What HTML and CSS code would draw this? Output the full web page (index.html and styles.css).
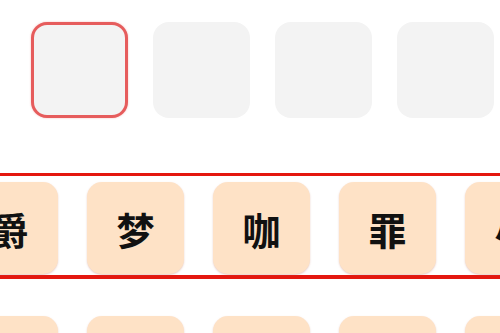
FILE: index.html
```html
<!DOCTYPE html>
<html lang="zh-CN">
<head>
    <meta charset="UTF-8">
    <meta name="viewport" content="width=device-width, initial-scale=1.0">
    <title>猜词</title>
    <link rel="stylesheet" href="styles.css">
</head>
<body>
    <div class="answer-row">
        <div class="slot active"></div>
        <div class="slot"></div>
        <div class="slot"></div>
        <div class="slot"></div>
    </div>

    <div class="pick-frame">
        <div class="tile-row">
            <div class="tile">爵</div>
            <div class="tile">梦</div>
            <div class="tile">咖</div>
            <div class="tile">罪</div>
            <div class="tile">小</div>
        </div>
    </div>

    <div class="tile-row next-row">
        <div class="tile">王</div>
        <div class="tile">想</div>
        <div class="tile">人</div>
        <div class="tile">恶</div>
        <div class="tile">士</div>
    </div>
</body>
</html>
```

FILE: styles.css
```css
body {
    margin: 0;
    padding: 0;
    background: #fff;
    font-family: "Noto Sans CJK SC", "Noto Sans", sans-serif;
    overflow: hidden;
    width: 500px;
    height: 333px;
}
.answer-row {
    display: flex;
    gap: 25px;
    padding: 22px 0 0 31px;
}
.slot {
    width: 97px;
    height: 96px;
    flex: none;
    box-sizing: border-box;
    background: #f3f3f3;
    border-radius: 16px;
}
.slot.active {
    border: 3px solid #e65c5c;
    box-shadow: 0 0 2px rgba(235, 110, 110, 0.5);
}
.pick-frame {
    margin: 55px 0 0 -10px;
    width: 520px;
    box-sizing: border-box;
    border-top: 3px solid #e4170f;
    border-bottom: 4px solid #e4170f;
    padding: 6px 0 1px 0;
}
.tile-row {
    display: flex;
    gap: 29px;
    margin-left: -29px;
}
.next-row {
    margin: 37px 0 0 -39px;
}
.tile {
    width: 97px;
    height: 92px;
    flex: none;
    background: #fee2c6;
    border-radius: 15px;
    box-shadow: 0 1px 2px rgba(190, 110, 90, 0.35);
    display: flex;
    align-items: center;
    justify-content: center;
    font-size: 38px;
    font-weight: bold;
    color: #111;
}
```
